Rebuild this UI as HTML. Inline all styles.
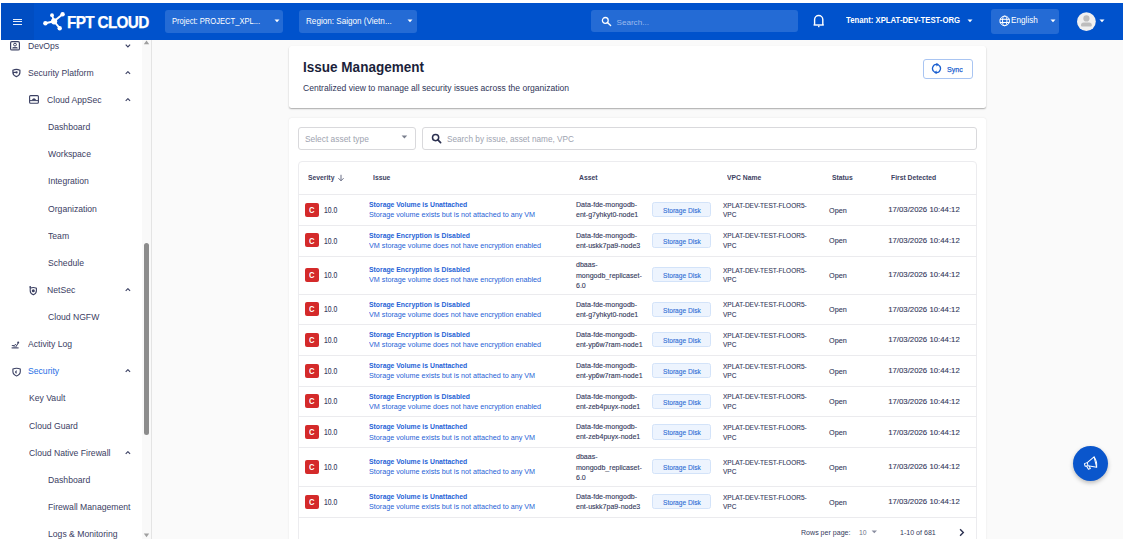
<!DOCTYPE html>
<html><head><meta charset="utf-8">
<style>
*{box-sizing:border-box;margin:0;padding:0}
html,body{width:1126px;height:543px;overflow:hidden;background:#fff;font-family:"Liberation Sans",sans-serif}
.abs{position:absolute}
#screen{position:absolute;left:1px;top:3px;width:1122px;height:536px;background:#fafafa;overflow:hidden}
#hdr{position:absolute;left:0;top:0;width:1122px;height:37px;background:#0052cc}
#ham{position:absolute;left:0;top:0;width:33px;height:37px;background:#004dc2}
.t{position:absolute;white-space:nowrap;line-height:1}
.dd{position:absolute;top:7px;height:23px;background:#246bd5;border-radius:3px}
#side{position:absolute;left:0;top:37px;width:150px;height:499px;background:#fff}
#sbtrack{position:absolute;left:141px;top:37px;width:9px;height:499px;background:#fafafa}
#sbline{position:absolute;left:150px;top:37px;width:1px;height:499px;background:#e3e3e3}
.si{position:absolute;font-size:9.4px;color:#3b4063;white-space:nowrap;line-height:1;transform:scaleX(0.92);transform-origin:0 0}
.card{position:absolute;background:#fff;border-radius:3px}
</style></head><body>
<div id="screen">
  <!-- header -->
  <div id="hdr">
    <div id="ham">
      <div class="abs" style="left:12px;top:15.5px;width:9px;height:1.2px;background:#e6eefb"></div>
      <div class="abs" style="left:12px;top:18px;width:9px;height:1.2px;background:#e6eefb"></div>
      <div class="abs" style="left:12px;top:20.5px;width:9px;height:1.2px;background:#e6eefb"></div>
    </div>
    <svg class="abs" style="left:0;top:0" width="160" height="37" viewBox="1 3 160 37">
      <g stroke="#fff" stroke-width="1.9" fill="none">
        <line x1="45.4" y1="23.2" x2="54.1" y2="21.3"/>
        <line x1="52" y1="15.2" x2="54.1" y2="21.3"/>
        <line x1="62.6" y1="14.2" x2="54.1" y2="21.3"/>
        <line x1="59.7" y1="28.2" x2="54.1" y2="21.3"/>
      </g>
      <g fill="#fff">
        <circle cx="45.4" cy="23.2" r="2.2"/>
        <circle cx="54.1" cy="21.3" r="3.1"/>
        <circle cx="52" cy="15.2" r="1.9"/>
        <circle cx="62.6" cy="14.2" r="2.2"/>
        <circle cx="59.7" cy="28.2" r="2.2"/>
      </g>
    </svg>
    <div class="t" style="left:66.3px;top:10.5px;font-size:16.2px;font-weight:bold;color:#fff;letter-spacing:-0.7px;-webkit-text-stroke:0.25px #fff;transform:scaleX(0.945);transform-origin:0 0">FPT CLOUD</div>
    <div class="dd" style="left:164px;width:118px"></div>
    <div class="t" style="left:171.4px;top:13.7px;font-size:8.4px;color:#fff;transform:scaleX(0.905);transform-origin:0 0">Project: PROJECT_XPL...</div>
    <svg class="abs" style="left:273px;top:15.5px" width="7" height="4"><path d="M0.5 0.5 L5.5 0.5 L3 3.3 Z" fill="#fff"/></svg>
    <div class="dd" style="left:298px;width:118px"></div>
    <div class="t" style="left:305px;top:13.7px;font-size:8.4px;color:#fff;transform:scaleX(0.97);transform-origin:0 0">Region: Saigon (Vietn...</div>
    <svg class="abs" style="left:406px;top:15.5px" width="7" height="4"><path d="M0.5 0.5 L5.5 0.5 L3 3.3 Z" fill="#fff"/></svg>
    <div class="dd" style="left:590px;top:7.2px;width:207px;height:22px"></div>
    <svg class="abs" style="left:599px;top:12px" width="14" height="14" viewBox="0 0 14 14"><circle cx="5.3" cy="5.4" r="2.9" stroke="#fff" stroke-width="1.3" fill="none"/><line x1="7.4" y1="7.5" x2="10.6" y2="10.6" stroke="#fff" stroke-width="1.4" stroke-linecap="round"/></svg>
    <div class="t" style="left:615.5px;top:16px;font-size:8.1px;color:#9dbaed">Search...</div>
    <svg class="abs" style="left:809.2px;top:7.6px" width="18" height="18" viewBox="0 0 18 18"><path d="M4.6 14 L4.6 8.6 A4.1 4.1 0 0 1 12.8 8.6 L12.8 14" stroke="#fff" stroke-width="1.4" fill="none"/><line x1="3.6" y1="14" x2="13.8" y2="14" stroke="#fff" stroke-width="1.4"/><rect x="8" y="14.6" width="1.5" height="1.6" fill="#e8eefa"/></svg>
    <div class="t" style="left:845px;top:13.3px;font-size:8.9px;font-weight:bold;color:#fff;transform:scaleX(0.872);transform-origin:0 0">Tenant: XPLAT-DEV-TEST-ORG</div>
    <svg class="abs" style="left:966px;top:15.5px" width="7" height="4"><path d="M0.5 0.5 L5.5 0.5 L3 3.3 Z" fill="#fff"/></svg>
    <div class="dd" style="left:990px;top:5.8px;width:68px;height:25px"></div>
    <svg class="abs" style="left:996.4px;top:10px" width="16" height="16" viewBox="0 0 16 16"><g stroke="#fff" stroke-width="1" fill="none"><circle cx="7.7" cy="7.9" r="4.8"/><ellipse cx="7.7" cy="7.9" rx="2.2" ry="4.8"/><line x1="2.9" y1="6.3" x2="12.5" y2="6.3"/><line x1="2.9" y1="9.5" x2="12.5" y2="9.5"/></g></svg>
    <div class="t" style="left:1010px;top:14px;font-size:8.2px;color:#fff">English</div>
    <svg class="abs" style="left:1049.2px;top:15.5px" width="7" height="4"><path d="M0.5 0.5 L5.5 0.5 L3 3.3 Z" fill="#fff"/></svg>
    <svg class="abs" style="left:1075px;top:8px" width="24" height="24" viewBox="0 0 24 24"><circle cx="10.4" cy="10.6" r="9.4" fill="#f0f0f0"/><circle cx="10.4" cy="7.4" r="3.1" fill="#bdbdbd"/><path d="M5 14.2 Q5 11.4 7.8 11.4 L13 11.4 Q15.8 11.4 15.8 14.2 L15.8 14.6 Q15.8 15.6 14.8 15.6 L6 15.6 Q5 15.6 5 14.6 Z" fill="#bdbdbd"/></svg>
    <svg class="abs" style="left:1098px;top:16px" width="7" height="4"><path d="M0.5 0.5 L5.5 0.5 L3 3.3 Z" fill="#fff"/></svg>
  </div>
  <div class="abs" style="left:0.00px;top:37.00px;width:150.00px;height:499.00px;background:#fff"></div>
  <div class="t" style="left:26.70px;top:38px;font-size:9.4px;color:#3b4063;transform:scaleX(0.92);transform-origin:0 0">DevOps</div>
  <svg class="abs" style="left:124.00px;top:40.70px" width="6" height="4" viewBox="0 0 6 4"><path d="M0.7 0.7 L2.9 2.9 L5.1 0.7" stroke="#3b4063" stroke-width="1.15" fill="none"/></svg>
  <svg class="abs" style="left:9.00px;top:37.80px" width="10" height="10" viewBox="0 0 10 10"><rect x="0.6" y="0.6" width="8.8" height="8.4" rx="1.3" stroke="#3b4063" stroke-width="1.2" fill="none"/><circle cx="5" cy="3.6" r="1.4" stroke="#3b4063" stroke-width="1" fill="none"/><path d="M2.6 6.6 L7.4 6.6" stroke="#3b4063" stroke-width="1"/><path d="M2.2 8 L7.8 8" stroke="#3b4063" stroke-width="0.8"/></svg>
  <div class="t" style="left:26.80px;top:65px;font-size:9.4px;color:#3b4063;transform:scaleX(0.92);transform-origin:0 0">Security Platform</div>
  <svg class="abs" style="left:124.00px;top:67.70px" width="6" height="4" viewBox="0 0 6 4"><path d="M0.7 2.9 L2.9 0.7 L5.1 2.9" stroke="#3b4063" stroke-width="1.15" fill="none"/></svg>
  <svg class="abs" style="left:10.80px;top:65.00px" width="10" height="10" viewBox="0 0 10 10"><path d="M0.9 2.2 Q4.4 0.4 7.9 2.2 L7.9 4.6 Q7.9 7.4 4.4 8.6 Q0.9 7.4 0.9 4.6 Z" stroke="#3b4063" stroke-width="1.2" fill="none"/><path d="M1 4.4 L4.4 4.4" stroke="#3b4063" stroke-width="1.2"/><circle cx="4.6" cy="4.4" r="1.1" fill="#3b4063"/></svg>
  <div class="t" style="left:45.80px;top:92px;font-size:9.4px;color:#3b4063;transform:scaleX(0.92);transform-origin:0 0">Cloud AppSec</div>
  <svg class="abs" style="left:124.00px;top:94.70px" width="6" height="4" viewBox="0 0 6 4"><path d="M0.7 2.9 L2.9 0.7 L5.1 2.9" stroke="#3b4063" stroke-width="1.15" fill="none"/></svg>
  <svg class="abs" style="left:28.20px;top:91.80px" width="10" height="10" viewBox="0 0 10 10"><rect x="0.6" y="0.6" width="8.8" height="7.6" rx="1" stroke="#3b4063" stroke-width="1.1" fill="none"/><line x1="0.6" y1="5.6" x2="9.4" y2="5.6" stroke="#3b4063" stroke-width="1"/><path d="M2.8 4.9 Q5 1.6 7.2 4.9 Z" fill="#3b4063"/></svg>
  <div class="t" style="left:47.00px;top:119px;font-size:9.4px;color:#3b4063;transform:scaleX(0.92);transform-origin:0 0">Dashboard</div>
  <div class="t" style="left:47.00px;top:146px;font-size:9.4px;color:#3b4063;transform:scaleX(0.92);transform-origin:0 0">Workspace</div>
  <div class="t" style="left:47.00px;top:173px;font-size:9.4px;color:#3b4063;transform:scaleX(0.92);transform-origin:0 0">Integration</div>
  <div class="t" style="left:47.00px;top:201px;font-size:9.4px;color:#3b4063;transform:scaleX(0.92);transform-origin:0 0">Organization</div>
  <div class="t" style="left:47.00px;top:228px;font-size:9.4px;color:#3b4063;transform:scaleX(0.92);transform-origin:0 0">Team</div>
  <div class="t" style="left:47.00px;top:255px;font-size:9.4px;color:#3b4063;transform:scaleX(0.92);transform-origin:0 0">Schedule</div>
  <div class="t" style="left:45.60px;top:282px;font-size:9.4px;color:#3b4063;transform:scaleX(0.92);transform-origin:0 0">NetSec</div>
  <svg class="abs" style="left:124.00px;top:284.70px" width="6" height="4" viewBox="0 0 6 4"><path d="M0.7 2.9 L2.9 0.7 L5.1 2.9" stroke="#3b4063" stroke-width="1.15" fill="none"/></svg>
  <svg class="abs" style="left:28.00px;top:282.50px" width="10" height="10" viewBox="0 0 10 10"><path d="M1.2 2.2 Q4.3 0.8 7.4 2.2 L7.4 4.8 Q7.4 7.6 4.3 8.8 Q1.2 7.6 1.2 4.8 Z" stroke="#3b4063" stroke-width="1.1" fill="none"/><circle cx="4.3" cy="4.8" r="1.5" fill="#3b4063"/><circle cx="1.2" cy="1" r="0.9" fill="#3b4063"/></svg>
  <div class="t" style="left:47.00px;top:309px;font-size:9.4px;color:#3b4063;transform:scaleX(0.92);transform-origin:0 0">Cloud NGFW</div>
  <div class="t" style="left:26.70px;top:336px;font-size:9.4px;color:#3b4063;transform:scaleX(0.92);transform-origin:0 0">Activity Log</div>
  <svg class="abs" style="left:10.20px;top:337.80px" width="10" height="10" viewBox="0 0 10 10"><path d="M0.6 6.9 L7.6 6.9" stroke="#3b4063" stroke-width="1.1"/><path d="M0.8 4.6 L3.4 4.6 L4.4 3.3 L5.6 4.8 L7.6 1.2" stroke="#3b4063" stroke-width="1" fill="none"/><circle cx="7.2" cy="1.4" r="1" fill="#3b4063"/><path d="M2.4 5.8 L6 5.8" stroke="#3b4063" stroke-width="0.7"/></svg>
  <div class="t" style="left:26.80px;top:363px;font-size:9.4px;color:#1f6fe5;transform:scaleX(0.92);transform-origin:0 0">Security</div>
  <svg class="abs" style="left:124.00px;top:365.70px" width="6" height="4" viewBox="0 0 6 4"><path d="M0.7 2.9 L2.9 0.7 L5.1 2.9" stroke="#3b4063" stroke-width="1.15" fill="none"/></svg>
  <svg class="abs" style="left:10.50px;top:363.60px" width="10" height="10" viewBox="0 0 10 10"><path d="M0.9 2 Q4.6 0.4 8.3 2 L8.3 4.6 Q8.3 7.8 4.6 9 Q0.9 7.8 0.9 4.6 Z" stroke="#3b4063" stroke-width="1.1" fill="none"/><path d="M4.6 3 L4.6 6.8 Q3 6.2 3 4.8 Z" fill="#3b4063"/></svg>
  <div class="t" style="left:28.20px;top:390px;font-size:9.4px;color:#3b4063;transform:scaleX(0.92);transform-origin:0 0">Key Vault</div>
  <div class="t" style="left:28.20px;top:418px;font-size:9.4px;color:#3b4063;transform:scaleX(0.92);transform-origin:0 0">Cloud Guard</div>
  <div class="t" style="left:28.20px;top:445px;font-size:9.4px;color:#3b4063;transform:scaleX(0.92);transform-origin:0 0">Cloud Native Firewall</div>
  <svg class="abs" style="left:124.00px;top:447.70px" width="6" height="4" viewBox="0 0 6 4"><path d="M0.7 2.9 L2.9 0.7 L5.1 2.9" stroke="#3b4063" stroke-width="1.15" fill="none"/></svg>
  <div class="t" style="left:47.00px;top:472px;font-size:9.4px;color:#3b4063;transform:scaleX(0.92);transform-origin:0 0">Dashboard</div>
  <div class="t" style="left:47.00px;top:499px;font-size:9.4px;color:#3b4063;transform:scaleX(0.92);transform-origin:0 0">Firewall Management</div>
  <div class="t" style="left:47.00px;top:526px;font-size:9.4px;color:#3b4063;transform:scaleX(0.92);transform-origin:0 0">Logs & Monitoring</div>
  <div class="abs" style="left:141.00px;top:37.00px;width:9.00px;height:499.00px;background:#f9f9f9"></div>
  <div class="abs" style="left:150.00px;top:37.00px;width:1.00px;height:499.00px;background:#e4e4e4"></div>
  <svg class="abs" style="left:142.00px;top:37.10px" width="7" height="5" viewBox="0 0 7 5"><path d="M0.8 4.2 L3.5 0.6 L6.2 4.2 Z" fill="#a0a0a0"/></svg>
  <div class="abs" style="left:143.00px;top:239.80px;width:5.00px;height:191.90px;border-radius:2.5px;background:#8c8c8c"></div>
  <svg class="abs" style="left:142.00px;top:529.70px" width="7" height="5" viewBox="0 0 7 5"><path d="M0.8 0.6 L3.5 4.2 L6.2 0.6 Z" fill="#a0a0a0"/></svg>
  <div class="abs" style="left:288.00px;top:42.50px;width:697.00px;height:62.50px;background:#fff;border-radius:2.5px;box-shadow:0 1px 1.5px rgba(0,0,0,0.32)"></div>
  <div class="t" style="left:302.00px;top:57px;font-size:14.0px;color:#1b1f3b;font-weight:bold;transform:scaleX(0.966);transform-origin:0 0">Issue Management</div>
  <div class="t" style="left:302.00px;top:81px;font-size:8.9px;color:#2f3558;transform:scaleX(0.965);transform-origin:0 0">Centralized view to manage all security issues across the organization</div>
  <div class="abs" style="left:922.00px;top:56.00px;width:49.50px;height:19.80px;border:1px solid #a9c5f2;border-radius:3px;background:#fff"></div>
  <svg class="abs" style="left:930.00px;top:60.30px" width="11" height="11" viewBox="0 0 11 11"><g stroke="#1a5fd0" stroke-width="1.3" fill="none"><path d="M6.4 1.6 A4 4 0 0 0 3.6 9"/><path d="M4.6 9.4 A4 4 0 0 0 7.4 2"/></g><path d="M5.4 -0.2 L8.1 1.6 L5.4 3.4 Z" fill="#1a5fd0"/><path d="M5.6 7.6 L2.9 9.4 L5.6 11.2 Z" fill="#1a5fd0"/></svg>
  <div class="t" style="left:946.20px;top:63px;font-size:8.0px;color:#1a5fd0;transform:scaleX(0.88);transform-origin:0 0;-webkit-text-stroke:0.25px #1a5fd0">Sync</div>
  <div class="abs" style="left:288.00px;top:114.70px;width:697.00px;height:442.30px;background:#fff;border-radius:2.5px;box-shadow:0 0 2px rgba(0,0,0,0.1)"></div>
  <div class="abs" style="left:297.00px;top:124.00px;width:118.20px;height:23.00px;border:1px solid #d9d9dc;border-radius:3px;background:#fff"></div>
  <div class="t" style="left:304.20px;top:132px;font-size:8.6px;color:#9ea3b0;transform:scaleX(0.975);transform-origin:0 0">Select asset type</div>
  <svg class="abs" style="left:400.00px;top:132.00px" width="7" height="4" viewBox="0 0 7 4"><path d="M0.6 0.5 L6.2 0.5 L3.4 3.4 Z" fill="#7a7f8e"/></svg>
  <div class="abs" style="left:421.00px;top:124.00px;width:555.00px;height:23.00px;border:1px solid #d9d9dc;border-radius:3px;background:#fff"></div>
  <svg class="abs" style="left:430.00px;top:130.00px" width="11" height="11" viewBox="0 0 11 11"><circle cx="4.6" cy="4.6" r="3.1" stroke="#2b3050" stroke-width="1.5" fill="none"/><line x1="6.9" y1="6.9" x2="9.6" y2="9.6" stroke="#2b3050" stroke-width="1.7" stroke-linecap="round"/></svg>
  <div class="t" style="left:446.00px;top:132px;font-size:8.6px;color:#9ea3b0;transform:scaleX(0.956);transform-origin:0 0">Search by issue, asset name, VPC</div>
  <div class="abs" style="left:297.00px;top:158.00px;width:679.00px;height:399.00px;border:1px solid #ececef;border-radius:4px;background:#fff"></div>
  <div class="t" style="left:307.10px;top:171px;font-size:7.3px;color:#3d4262;font-weight:bold;transform:scaleX(0.93);transform-origin:0 0">Severity</div>
  <svg class="abs" style="left:335.50px;top:170.60px" width="8" height="8" viewBox="0 0 8 8"><path d="M4 0.8 L4 6.6 M1.4 4.2 L4 6.8 L6.6 4.2" stroke="#5a5f78" stroke-width="0.9" fill="none"/></svg>
  <div class="t" style="left:372.00px;top:171px;font-size:7.3px;color:#3d4262;font-weight:bold;transform:scaleX(0.93);transform-origin:0 0">Issue</div>
  <div class="t" style="left:578.00px;top:171px;font-size:7.3px;color:#3d4262;font-weight:bold;transform:scaleX(0.93);transform-origin:0 0">Asset</div>
  <div class="t" style="left:725.60px;top:171px;font-size:7.3px;color:#3d4262;font-weight:bold;transform:scaleX(0.93);transform-origin:0 0">VPC Name</div>
  <div class="t" style="left:831.20px;top:171px;font-size:7.3px;color:#3d4262;font-weight:bold;transform:scaleX(0.93);transform-origin:0 0">Status</div>
  <div class="t" style="left:890.20px;top:171px;font-size:7.3px;color:#3d4262;font-weight:bold;transform:scaleX(0.93);transform-origin:0 0">First Detected</div>
  <div class="abs" style="left:297.00px;top:191.00px;width:679.00px;height:1.00px;background:#ebebee"></div>
  <div class="abs" style="left:297.00px;top:221.60px;width:679.00px;height:1.00px;background:#ebebee"></div>
  <div class="abs" style="left:297.00px;top:252.50px;width:679.00px;height:1.00px;background:#ebebee"></div>
  <div class="abs" style="left:297.00px;top:290.60px;width:679.00px;height:1.00px;background:#ebebee"></div>
  <div class="abs" style="left:297.00px;top:321.20px;width:679.00px;height:1.00px;background:#ebebee"></div>
  <div class="abs" style="left:297.00px;top:351.60px;width:679.00px;height:1.00px;background:#ebebee"></div>
  <div class="abs" style="left:297.00px;top:382.80px;width:679.00px;height:1.00px;background:#ebebee"></div>
  <div class="abs" style="left:297.00px;top:413.20px;width:679.00px;height:1.00px;background:#ebebee"></div>
  <div class="abs" style="left:297.00px;top:444.10px;width:679.00px;height:1.00px;background:#ebebee"></div>
  <div class="abs" style="left:297.00px;top:482.80px;width:679.00px;height:1.00px;background:#ebebee"></div>
  <div class="abs" style="left:297.00px;top:513.90px;width:679.00px;height:1.00px;background:#ebebee"></div>
  <div class="abs" style="left:304.10px;top:199.60px;width:13.80px;height:14.00px;background:#d42a2a;border-radius:2px"></div>
  <div class="t" style="left:308.00px;top:203px;font-size:8.3px;color:#fff;font-weight:bold;transform:scaleX(0.92);transform-origin:0 0">C</div>
  <div class="t" style="left:322.60px;top:203px;font-size:8.3px;color:#353a5c;transform:scaleX(0.82);transform-origin:0 0;-webkit-text-stroke:0.12px #353a5c">10.0</div>
  <div class="t" style="left:367.80px;top:198px;font-size:7.2px;color:#1f63d6;font-weight:bold;transform:scaleX(0.95);transform-origin:0 0">Storage Volume is Unattached</div>
  <div class="t" style="left:367.80px;top:208px;font-size:7.5px;color:#1f63d6;transform:scaleX(0.96);transform-origin:0 0">Storage volume exists but is not attached to any VM</div>
  <div class="t" style="left:574.80px;top:198px;font-size:7.2px;color:#353a5c;transform:scaleX(0.98);transform-origin:0 0;-webkit-text-stroke:0.12px #353a5c">Data-fde-mongodb-</div>
  <div class="t" style="left:574.80px;top:208px;font-size:7.2px;color:#353a5c;transform:scaleX(0.98);transform-origin:0 0;-webkit-text-stroke:0.12px #353a5c">ent-g7yhkyt0-node1</div>
  <div class="abs" style="left:651.20px;top:198.90px;width:59.00px;height:15.30px;background:#edf4fe;border:1px solid #d3e3f9;border-radius:2.5px"></div>
  <div class="t" style="left:661.70px;top:205px;font-size:6.8px;color:#2c6bd4;transform:scaleX(0.97);transform-origin:0 0;-webkit-text-stroke:0.1px #2c6bd4">Storage Disk</div>
  <div class="t" style="left:722.00px;top:199px;font-size:7.4px;color:#353a5c;transform:scaleX(0.88);transform-origin:0 0;-webkit-text-stroke:0.12px #353a5c">XPLAT-DEV-TEST-FLOOR5-</div>
  <div class="t" style="left:722.00px;top:208px;font-size:7.4px;color:#353a5c;transform:scaleX(0.88);transform-origin:0 0;-webkit-text-stroke:0.12px #353a5c">VPC</div>
  <div class="t" style="left:827.80px;top:204px;font-size:7.8px;color:#353a5c;transform:scaleX(0.93);transform-origin:0 0;-webkit-text-stroke:0.12px #353a5c">Open</div>
  <div class="t" style="left:887.20px;top:203px;font-size:7.8px;color:#353a5c;-webkit-text-stroke:0.12px #353a5c">17/03/2026 10:44:12</div>
  <div class="abs" style="left:304.10px;top:230.35px;width:13.80px;height:14.00px;background:#d42a2a;border-radius:2px"></div>
  <div class="t" style="left:308.00px;top:234px;font-size:8.3px;color:#fff;font-weight:bold;transform:scaleX(0.92);transform-origin:0 0">C</div>
  <div class="t" style="left:322.60px;top:234px;font-size:8.3px;color:#353a5c;transform:scaleX(0.82);transform-origin:0 0;-webkit-text-stroke:0.12px #353a5c">10.0</div>
  <div class="t" style="left:367.80px;top:229px;font-size:7.2px;color:#1f63d6;font-weight:bold;transform:scaleX(0.95);transform-origin:0 0">Storage Encryption is Disabled</div>
  <div class="t" style="left:367.80px;top:239px;font-size:7.5px;color:#1f63d6;transform:scaleX(0.96);transform-origin:0 0">VM storage volume does not have encryption enabled</div>
  <div class="t" style="left:574.80px;top:229px;font-size:7.2px;color:#353a5c;transform:scaleX(0.98);transform-origin:0 0;-webkit-text-stroke:0.12px #353a5c">Data-fde-mongodb-</div>
  <div class="t" style="left:574.80px;top:239px;font-size:7.2px;color:#353a5c;transform:scaleX(0.98);transform-origin:0 0;-webkit-text-stroke:0.12px #353a5c">ent-uskk7pa9-node3</div>
  <div class="abs" style="left:651.20px;top:229.65px;width:59.00px;height:15.30px;background:#edf4fe;border:1px solid #d3e3f9;border-radius:2.5px"></div>
  <div class="t" style="left:661.70px;top:236px;font-size:6.8px;color:#2c6bd4;transform:scaleX(0.97);transform-origin:0 0;-webkit-text-stroke:0.1px #2c6bd4">Storage Disk</div>
  <div class="t" style="left:722.00px;top:229px;font-size:7.4px;color:#353a5c;transform:scaleX(0.88);transform-origin:0 0;-webkit-text-stroke:0.12px #353a5c">XPLAT-DEV-TEST-FLOOR5-</div>
  <div class="t" style="left:722.00px;top:239px;font-size:7.4px;color:#353a5c;transform:scaleX(0.88);transform-origin:0 0;-webkit-text-stroke:0.12px #353a5c">VPC</div>
  <div class="t" style="left:827.80px;top:234px;font-size:7.8px;color:#353a5c;transform:scaleX(0.93);transform-origin:0 0;-webkit-text-stroke:0.12px #353a5c">Open</div>
  <div class="t" style="left:887.20px;top:234px;font-size:7.8px;color:#353a5c;-webkit-text-stroke:0.12px #353a5c">17/03/2026 10:44:12</div>
  <div class="abs" style="left:304.10px;top:264.85px;width:13.80px;height:14.00px;background:#d42a2a;border-radius:2px"></div>
  <div class="t" style="left:308.00px;top:268px;font-size:8.3px;color:#fff;font-weight:bold;transform:scaleX(0.92);transform-origin:0 0">C</div>
  <div class="t" style="left:322.60px;top:268px;font-size:8.3px;color:#353a5c;transform:scaleX(0.82);transform-origin:0 0;-webkit-text-stroke:0.12px #353a5c">10.0</div>
  <div class="t" style="left:367.80px;top:263px;font-size:7.2px;color:#1f63d6;font-weight:bold;transform:scaleX(0.95);transform-origin:0 0">Storage Encryption is Disabled</div>
  <div class="t" style="left:367.80px;top:273px;font-size:7.5px;color:#1f63d6;transform:scaleX(0.96);transform-origin:0 0">VM storage volume does not have encryption enabled</div>
  <div class="t" style="left:574.80px;top:258px;font-size:7.2px;color:#353a5c;transform:scaleX(0.98);transform-origin:0 0;-webkit-text-stroke:0.12px #353a5c">dbaas-</div>
  <div class="t" style="left:574.80px;top:269px;font-size:7.2px;color:#353a5c;transform:scaleX(0.98);transform-origin:0 0;-webkit-text-stroke:0.12px #353a5c">mongodb_replicaset-</div>
  <div class="t" style="left:574.80px;top:279px;font-size:7.2px;color:#353a5c;transform:scaleX(0.98);transform-origin:0 0;-webkit-text-stroke:0.12px #353a5c">6.0</div>
  <div class="abs" style="left:651.20px;top:264.15px;width:59.00px;height:15.30px;background:#edf4fe;border:1px solid #d3e3f9;border-radius:2.5px"></div>
  <div class="t" style="left:661.70px;top:270px;font-size:6.8px;color:#2c6bd4;transform:scaleX(0.97);transform-origin:0 0;-webkit-text-stroke:0.1px #2c6bd4">Storage Disk</div>
  <div class="t" style="left:722.00px;top:264px;font-size:7.4px;color:#353a5c;transform:scaleX(0.88);transform-origin:0 0;-webkit-text-stroke:0.12px #353a5c">XPLAT-DEV-TEST-FLOOR5-</div>
  <div class="t" style="left:722.00px;top:273px;font-size:7.4px;color:#353a5c;transform:scaleX(0.88);transform-origin:0 0;-webkit-text-stroke:0.12px #353a5c">VPC</div>
  <div class="t" style="left:827.80px;top:269px;font-size:7.8px;color:#353a5c;transform:scaleX(0.93);transform-origin:0 0;-webkit-text-stroke:0.12px #353a5c">Open</div>
  <div class="t" style="left:887.20px;top:268px;font-size:7.8px;color:#353a5c;-webkit-text-stroke:0.12px #353a5c">17/03/2026 10:44:12</div>
  <div class="abs" style="left:304.10px;top:299.20px;width:13.80px;height:14.00px;background:#d42a2a;border-radius:2px"></div>
  <div class="t" style="left:308.00px;top:302px;font-size:8.3px;color:#fff;font-weight:bold;transform:scaleX(0.92);transform-origin:0 0">C</div>
  <div class="t" style="left:322.60px;top:302px;font-size:8.3px;color:#353a5c;transform:scaleX(0.82);transform-origin:0 0;-webkit-text-stroke:0.12px #353a5c">10.0</div>
  <div class="t" style="left:367.80px;top:298px;font-size:7.2px;color:#1f63d6;font-weight:bold;transform:scaleX(0.95);transform-origin:0 0">Storage Encryption is Disabled</div>
  <div class="t" style="left:367.80px;top:308px;font-size:7.5px;color:#1f63d6;transform:scaleX(0.96);transform-origin:0 0">VM storage volume does not have encryption enabled</div>
  <div class="t" style="left:574.80px;top:298px;font-size:7.2px;color:#353a5c;transform:scaleX(0.98);transform-origin:0 0;-webkit-text-stroke:0.12px #353a5c">Data-fde-mongodb-</div>
  <div class="t" style="left:574.80px;top:308px;font-size:7.2px;color:#353a5c;transform:scaleX(0.98);transform-origin:0 0;-webkit-text-stroke:0.12px #353a5c">ent-g7yhkyt0-node1</div>
  <div class="abs" style="left:651.20px;top:298.50px;width:59.00px;height:15.30px;background:#edf4fe;border:1px solid #d3e3f9;border-radius:2.5px"></div>
  <div class="t" style="left:661.70px;top:305px;font-size:6.8px;color:#2c6bd4;transform:scaleX(0.97);transform-origin:0 0;-webkit-text-stroke:0.1px #2c6bd4">Storage Disk</div>
  <div class="t" style="left:722.00px;top:298px;font-size:7.4px;color:#353a5c;transform:scaleX(0.88);transform-origin:0 0;-webkit-text-stroke:0.12px #353a5c">XPLAT-DEV-TEST-FLOOR5-</div>
  <div class="t" style="left:722.00px;top:308px;font-size:7.4px;color:#353a5c;transform:scaleX(0.88);transform-origin:0 0;-webkit-text-stroke:0.12px #353a5c">VPC</div>
  <div class="t" style="left:827.80px;top:303px;font-size:7.8px;color:#353a5c;transform:scaleX(0.93);transform-origin:0 0;-webkit-text-stroke:0.12px #353a5c">Open</div>
  <div class="t" style="left:887.20px;top:303px;font-size:7.8px;color:#353a5c;-webkit-text-stroke:0.12px #353a5c">17/03/2026 10:44:12</div>
  <div class="abs" style="left:304.10px;top:329.70px;width:13.80px;height:14.00px;background:#d42a2a;border-radius:2px"></div>
  <div class="t" style="left:308.00px;top:333px;font-size:8.3px;color:#fff;font-weight:bold;transform:scaleX(0.92);transform-origin:0 0">C</div>
  <div class="t" style="left:322.60px;top:333px;font-size:8.3px;color:#353a5c;transform:scaleX(0.82);transform-origin:0 0;-webkit-text-stroke:0.12px #353a5c">10.0</div>
  <div class="t" style="left:367.80px;top:328px;font-size:7.2px;color:#1f63d6;font-weight:bold;transform:scaleX(0.95);transform-origin:0 0">Storage Encryption is Disabled</div>
  <div class="t" style="left:367.80px;top:338px;font-size:7.5px;color:#1f63d6;transform:scaleX(0.96);transform-origin:0 0">VM storage volume does not have encryption enabled</div>
  <div class="t" style="left:574.80px;top:328px;font-size:7.2px;color:#353a5c;transform:scaleX(0.98);transform-origin:0 0;-webkit-text-stroke:0.12px #353a5c">Data-fde-mongodb-</div>
  <div class="t" style="left:574.80px;top:338px;font-size:7.2px;color:#353a5c;transform:scaleX(0.98);transform-origin:0 0;-webkit-text-stroke:0.12px #353a5c">ent-yp6w7ram-node1</div>
  <div class="abs" style="left:651.20px;top:329.00px;width:59.00px;height:15.30px;background:#edf4fe;border:1px solid #d3e3f9;border-radius:2.5px"></div>
  <div class="t" style="left:661.70px;top:335px;font-size:6.8px;color:#2c6bd4;transform:scaleX(0.97);transform-origin:0 0;-webkit-text-stroke:0.1px #2c6bd4">Storage Disk</div>
  <div class="t" style="left:722.00px;top:329px;font-size:7.4px;color:#353a5c;transform:scaleX(0.88);transform-origin:0 0;-webkit-text-stroke:0.12px #353a5c">XPLAT-DEV-TEST-FLOOR5-</div>
  <div class="t" style="left:722.00px;top:338px;font-size:7.4px;color:#353a5c;transform:scaleX(0.88);transform-origin:0 0;-webkit-text-stroke:0.12px #353a5c">VPC</div>
  <div class="t" style="left:827.80px;top:334px;font-size:7.8px;color:#353a5c;transform:scaleX(0.93);transform-origin:0 0;-webkit-text-stroke:0.12px #353a5c">Open</div>
  <div class="t" style="left:887.20px;top:333px;font-size:7.8px;color:#353a5c;-webkit-text-stroke:0.12px #353a5c">17/03/2026 10:44:12</div>
  <div class="abs" style="left:304.10px;top:360.50px;width:13.80px;height:14.00px;background:#d42a2a;border-radius:2px"></div>
  <div class="t" style="left:308.00px;top:364px;font-size:8.3px;color:#fff;font-weight:bold;transform:scaleX(0.92);transform-origin:0 0">C</div>
  <div class="t" style="left:322.60px;top:364px;font-size:8.3px;color:#353a5c;transform:scaleX(0.82);transform-origin:0 0;-webkit-text-stroke:0.12px #353a5c">10.0</div>
  <div class="t" style="left:367.80px;top:359px;font-size:7.2px;color:#1f63d6;font-weight:bold;transform:scaleX(0.95);transform-origin:0 0">Storage Volume is Unattached</div>
  <div class="t" style="left:367.80px;top:369px;font-size:7.5px;color:#1f63d6;transform:scaleX(0.96);transform-origin:0 0">Storage volume exists but is not attached to any VM</div>
  <div class="t" style="left:574.80px;top:359px;font-size:7.2px;color:#353a5c;transform:scaleX(0.98);transform-origin:0 0;-webkit-text-stroke:0.12px #353a5c">Data-fde-mongodb-</div>
  <div class="t" style="left:574.80px;top:369px;font-size:7.2px;color:#353a5c;transform:scaleX(0.98);transform-origin:0 0;-webkit-text-stroke:0.12px #353a5c">ent-yp6w7ram-node1</div>
  <div class="abs" style="left:651.20px;top:359.80px;width:59.00px;height:15.30px;background:#edf4fe;border:1px solid #d3e3f9;border-radius:2.5px"></div>
  <div class="t" style="left:661.70px;top:366px;font-size:6.8px;color:#2c6bd4;transform:scaleX(0.97);transform-origin:0 0;-webkit-text-stroke:0.1px #2c6bd4">Storage Disk</div>
  <div class="t" style="left:722.00px;top:360px;font-size:7.4px;color:#353a5c;transform:scaleX(0.88);transform-origin:0 0;-webkit-text-stroke:0.12px #353a5c">XPLAT-DEV-TEST-FLOOR5-</div>
  <div class="t" style="left:722.00px;top:369px;font-size:7.4px;color:#353a5c;transform:scaleX(0.88);transform-origin:0 0;-webkit-text-stroke:0.12px #353a5c">VPC</div>
  <div class="t" style="left:827.80px;top:365px;font-size:7.8px;color:#353a5c;transform:scaleX(0.93);transform-origin:0 0;-webkit-text-stroke:0.12px #353a5c">Open</div>
  <div class="t" style="left:887.20px;top:364px;font-size:7.8px;color:#353a5c;-webkit-text-stroke:0.12px #353a5c">17/03/2026 10:44:12</div>
  <div class="abs" style="left:304.10px;top:391.30px;width:13.80px;height:14.00px;background:#d42a2a;border-radius:2px"></div>
  <div class="t" style="left:308.00px;top:394px;font-size:8.3px;color:#fff;font-weight:bold;transform:scaleX(0.92);transform-origin:0 0">C</div>
  <div class="t" style="left:322.60px;top:394px;font-size:8.3px;color:#353a5c;transform:scaleX(0.82);transform-origin:0 0;-webkit-text-stroke:0.12px #353a5c">10.0</div>
  <div class="t" style="left:367.80px;top:390px;font-size:7.2px;color:#1f63d6;font-weight:bold;transform:scaleX(0.95);transform-origin:0 0">Storage Encryption is Disabled</div>
  <div class="t" style="left:367.80px;top:400px;font-size:7.5px;color:#1f63d6;transform:scaleX(0.96);transform-origin:0 0">VM storage volume does not have encryption enabled</div>
  <div class="t" style="left:574.80px;top:390px;font-size:7.2px;color:#353a5c;transform:scaleX(0.98);transform-origin:0 0;-webkit-text-stroke:0.12px #353a5c">Data-fde-mongodb-</div>
  <div class="t" style="left:574.80px;top:400px;font-size:7.2px;color:#353a5c;transform:scaleX(0.98);transform-origin:0 0;-webkit-text-stroke:0.12px #353a5c">ent-zeb4puyx-node1</div>
  <div class="abs" style="left:651.20px;top:390.60px;width:59.00px;height:15.30px;background:#edf4fe;border:1px solid #d3e3f9;border-radius:2.5px"></div>
  <div class="t" style="left:661.70px;top:397px;font-size:6.8px;color:#2c6bd4;transform:scaleX(0.97);transform-origin:0 0;-webkit-text-stroke:0.1px #2c6bd4">Storage Disk</div>
  <div class="t" style="left:722.00px;top:390px;font-size:7.4px;color:#353a5c;transform:scaleX(0.88);transform-origin:0 0;-webkit-text-stroke:0.12px #353a5c">XPLAT-DEV-TEST-FLOOR5-</div>
  <div class="t" style="left:722.00px;top:400px;font-size:7.4px;color:#353a5c;transform:scaleX(0.88);transform-origin:0 0;-webkit-text-stroke:0.12px #353a5c">VPC</div>
  <div class="t" style="left:827.80px;top:395px;font-size:7.8px;color:#353a5c;transform:scaleX(0.93);transform-origin:0 0;-webkit-text-stroke:0.12px #353a5c">Open</div>
  <div class="t" style="left:887.20px;top:395px;font-size:7.8px;color:#353a5c;-webkit-text-stroke:0.12px #353a5c">17/03/2026 10:44:12</div>
  <div class="abs" style="left:304.10px;top:421.95px;width:13.80px;height:14.00px;background:#d42a2a;border-radius:2px"></div>
  <div class="t" style="left:308.00px;top:425px;font-size:8.3px;color:#fff;font-weight:bold;transform:scaleX(0.92);transform-origin:0 0">C</div>
  <div class="t" style="left:322.60px;top:425px;font-size:8.3px;color:#353a5c;transform:scaleX(0.82);transform-origin:0 0;-webkit-text-stroke:0.12px #353a5c">10.0</div>
  <div class="t" style="left:367.80px;top:420px;font-size:7.2px;color:#1f63d6;font-weight:bold;transform:scaleX(0.95);transform-origin:0 0">Storage Volume is Unattached</div>
  <div class="t" style="left:367.80px;top:431px;font-size:7.5px;color:#1f63d6;transform:scaleX(0.96);transform-origin:0 0">Storage volume exists but is not attached to any VM</div>
  <div class="t" style="left:574.80px;top:420px;font-size:7.2px;color:#353a5c;transform:scaleX(0.98);transform-origin:0 0;-webkit-text-stroke:0.12px #353a5c">Data-fde-mongodb-</div>
  <div class="t" style="left:574.80px;top:430px;font-size:7.2px;color:#353a5c;transform:scaleX(0.98);transform-origin:0 0;-webkit-text-stroke:0.12px #353a5c">ent-zeb4puyx-node1</div>
  <div class="abs" style="left:651.20px;top:421.25px;width:59.00px;height:15.30px;background:#edf4fe;border:1px solid #d3e3f9;border-radius:2.5px"></div>
  <div class="t" style="left:661.70px;top:427px;font-size:6.8px;color:#2c6bd4;transform:scaleX(0.97);transform-origin:0 0;-webkit-text-stroke:0.1px #2c6bd4">Storage Disk</div>
  <div class="t" style="left:722.00px;top:421px;font-size:7.4px;color:#353a5c;transform:scaleX(0.88);transform-origin:0 0;-webkit-text-stroke:0.12px #353a5c">XPLAT-DEV-TEST-FLOOR5-</div>
  <div class="t" style="left:722.00px;top:431px;font-size:7.4px;color:#353a5c;transform:scaleX(0.88);transform-origin:0 0;-webkit-text-stroke:0.12px #353a5c">VPC</div>
  <div class="t" style="left:827.80px;top:426px;font-size:7.8px;color:#353a5c;transform:scaleX(0.93);transform-origin:0 0;-webkit-text-stroke:0.12px #353a5c">Open</div>
  <div class="t" style="left:887.20px;top:426px;font-size:7.8px;color:#353a5c;-webkit-text-stroke:0.12px #353a5c">17/03/2026 10:44:12</div>
  <div class="abs" style="left:304.10px;top:456.75px;width:13.80px;height:14.00px;background:#d42a2a;border-radius:2px"></div>
  <div class="t" style="left:308.00px;top:460px;font-size:8.3px;color:#fff;font-weight:bold;transform:scaleX(0.92);transform-origin:0 0">C</div>
  <div class="t" style="left:322.60px;top:460px;font-size:8.3px;color:#353a5c;transform:scaleX(0.82);transform-origin:0 0;-webkit-text-stroke:0.12px #353a5c">10.0</div>
  <div class="t" style="left:367.80px;top:455px;font-size:7.2px;color:#1f63d6;font-weight:bold;transform:scaleX(0.95);transform-origin:0 0">Storage Volume is Unattached</div>
  <div class="t" style="left:367.80px;top:465px;font-size:7.5px;color:#1f63d6;transform:scaleX(0.96);transform-origin:0 0">Storage volume exists but is not attached to any VM</div>
  <div class="t" style="left:574.80px;top:450px;font-size:7.2px;color:#353a5c;transform:scaleX(0.98);transform-origin:0 0;-webkit-text-stroke:0.12px #353a5c">dbaas-</div>
  <div class="t" style="left:574.80px;top:461px;font-size:7.2px;color:#353a5c;transform:scaleX(0.98);transform-origin:0 0;-webkit-text-stroke:0.12px #353a5c">mongodb_replicaset-</div>
  <div class="t" style="left:574.80px;top:471px;font-size:7.2px;color:#353a5c;transform:scaleX(0.98);transform-origin:0 0;-webkit-text-stroke:0.12px #353a5c">6.0</div>
  <div class="abs" style="left:651.20px;top:456.05px;width:59.00px;height:15.30px;background:#edf4fe;border:1px solid #d3e3f9;border-radius:2.5px"></div>
  <div class="t" style="left:661.70px;top:462px;font-size:6.8px;color:#2c6bd4;transform:scaleX(0.97);transform-origin:0 0;-webkit-text-stroke:0.1px #2c6bd4">Storage Disk</div>
  <div class="t" style="left:722.00px;top:456px;font-size:7.4px;color:#353a5c;transform:scaleX(0.88);transform-origin:0 0;-webkit-text-stroke:0.12px #353a5c">XPLAT-DEV-TEST-FLOOR5-</div>
  <div class="t" style="left:722.00px;top:465px;font-size:7.4px;color:#353a5c;transform:scaleX(0.88);transform-origin:0 0;-webkit-text-stroke:0.12px #353a5c">VPC</div>
  <div class="t" style="left:827.80px;top:461px;font-size:7.8px;color:#353a5c;transform:scaleX(0.93);transform-origin:0 0;-webkit-text-stroke:0.12px #353a5c">Open</div>
  <div class="t" style="left:887.20px;top:460px;font-size:7.8px;color:#353a5c;-webkit-text-stroke:0.12px #353a5c">17/03/2026 10:44:12</div>
  <div class="abs" style="left:304.10px;top:491.65px;width:13.80px;height:14.00px;background:#d42a2a;border-radius:2px"></div>
  <div class="t" style="left:308.00px;top:495px;font-size:8.3px;color:#fff;font-weight:bold;transform:scaleX(0.92);transform-origin:0 0">C</div>
  <div class="t" style="left:322.60px;top:495px;font-size:8.3px;color:#353a5c;transform:scaleX(0.82);transform-origin:0 0;-webkit-text-stroke:0.12px #353a5c">10.0</div>
  <div class="t" style="left:367.80px;top:490px;font-size:7.2px;color:#1f63d6;font-weight:bold;transform:scaleX(0.95);transform-origin:0 0">Storage Volume is Unattached</div>
  <div class="t" style="left:367.80px;top:500px;font-size:7.5px;color:#1f63d6;transform:scaleX(0.96);transform-origin:0 0">Storage volume exists but is not attached to any VM</div>
  <div class="t" style="left:574.80px;top:490px;font-size:7.2px;color:#353a5c;transform:scaleX(0.98);transform-origin:0 0;-webkit-text-stroke:0.12px #353a5c">Data-fde-mongodb-</div>
  <div class="t" style="left:574.80px;top:500px;font-size:7.2px;color:#353a5c;transform:scaleX(0.98);transform-origin:0 0;-webkit-text-stroke:0.12px #353a5c">ent-uskk7pa9-node3</div>
  <div class="abs" style="left:651.20px;top:490.95px;width:59.00px;height:15.30px;background:#edf4fe;border:1px solid #d3e3f9;border-radius:2.5px"></div>
  <div class="t" style="left:661.70px;top:497px;font-size:6.8px;color:#2c6bd4;transform:scaleX(0.97);transform-origin:0 0;-webkit-text-stroke:0.1px #2c6bd4">Storage Disk</div>
  <div class="t" style="left:722.00px;top:491px;font-size:7.4px;color:#353a5c;transform:scaleX(0.88);transform-origin:0 0;-webkit-text-stroke:0.12px #353a5c">XPLAT-DEV-TEST-FLOOR5-</div>
  <div class="t" style="left:722.00px;top:500px;font-size:7.4px;color:#353a5c;transform:scaleX(0.88);transform-origin:0 0;-webkit-text-stroke:0.12px #353a5c">VPC</div>
  <div class="t" style="left:827.80px;top:496px;font-size:7.8px;color:#353a5c;transform:scaleX(0.93);transform-origin:0 0;-webkit-text-stroke:0.12px #353a5c">Open</div>
  <div class="t" style="left:887.20px;top:495px;font-size:7.8px;color:#353a5c;-webkit-text-stroke:0.12px #353a5c">17/03/2026 10:44:12</div>
  <div class="t" style="left:799.60px;top:526px;font-size:7.6px;color:#353a5c;transform:scaleX(0.93);transform-origin:0 0">Rows per page:</div>
  <div class="t" style="left:858.00px;top:526px;font-size:7.6px;color:#6f7489;transform:scaleX(0.9);transform-origin:0 0">10</div>
  <svg class="abs" style="left:870.00px;top:527.30px" width="7" height="4" viewBox="0 0 7 4"><path d="M0.6 0.5 L6 0.5 L3.3 3.3 Z" fill="#8a8ea0"/></svg>
  <div class="t" style="left:899.30px;top:526px;font-size:7.6px;color:#353a5c;transform:scaleX(0.93);transform-origin:0 0">1-10 of 681</div>
  <svg class="abs" style="left:957.00px;top:524.60px" width="8" height="9" viewBox="0 0 8 9"><path d="M2.1 1.3 L5.3 4.5 L2.1 7.7" stroke="#2b3050" stroke-width="1.4" fill="none"/></svg>
  <div class="abs" style="left:1072.00px;top:442.80px;width:35.00px;height:35.00px;background:#0a56cc;border-radius:50%;box-shadow:0 2px 4px rgba(0,0,0,0.25)"></div>
  <svg class="abs" style="left:1079.50px;top:449.50px" width="21" height="21" viewBox="0 0 21 21"><g transform="rotate(-14 10.5 10.5)" stroke="#fff" stroke-width="1" fill="none" stroke-linejoin="round"><path d="M6.6 8.6 L14.6 4.6 L14.6 15.4 L6.6 11.8 Z"/><path d="M6.6 8.6 L3.6 8.9 L3.6 11.6 L6.6 11.8"/><path d="M5 11.7 L6.1 15.4 L8.2 15 L7.6 12.2"/><path d="M14.6 4.6 Q16.6 10 14.6 15.4"/></g></svg>
</div>
</body></html>
